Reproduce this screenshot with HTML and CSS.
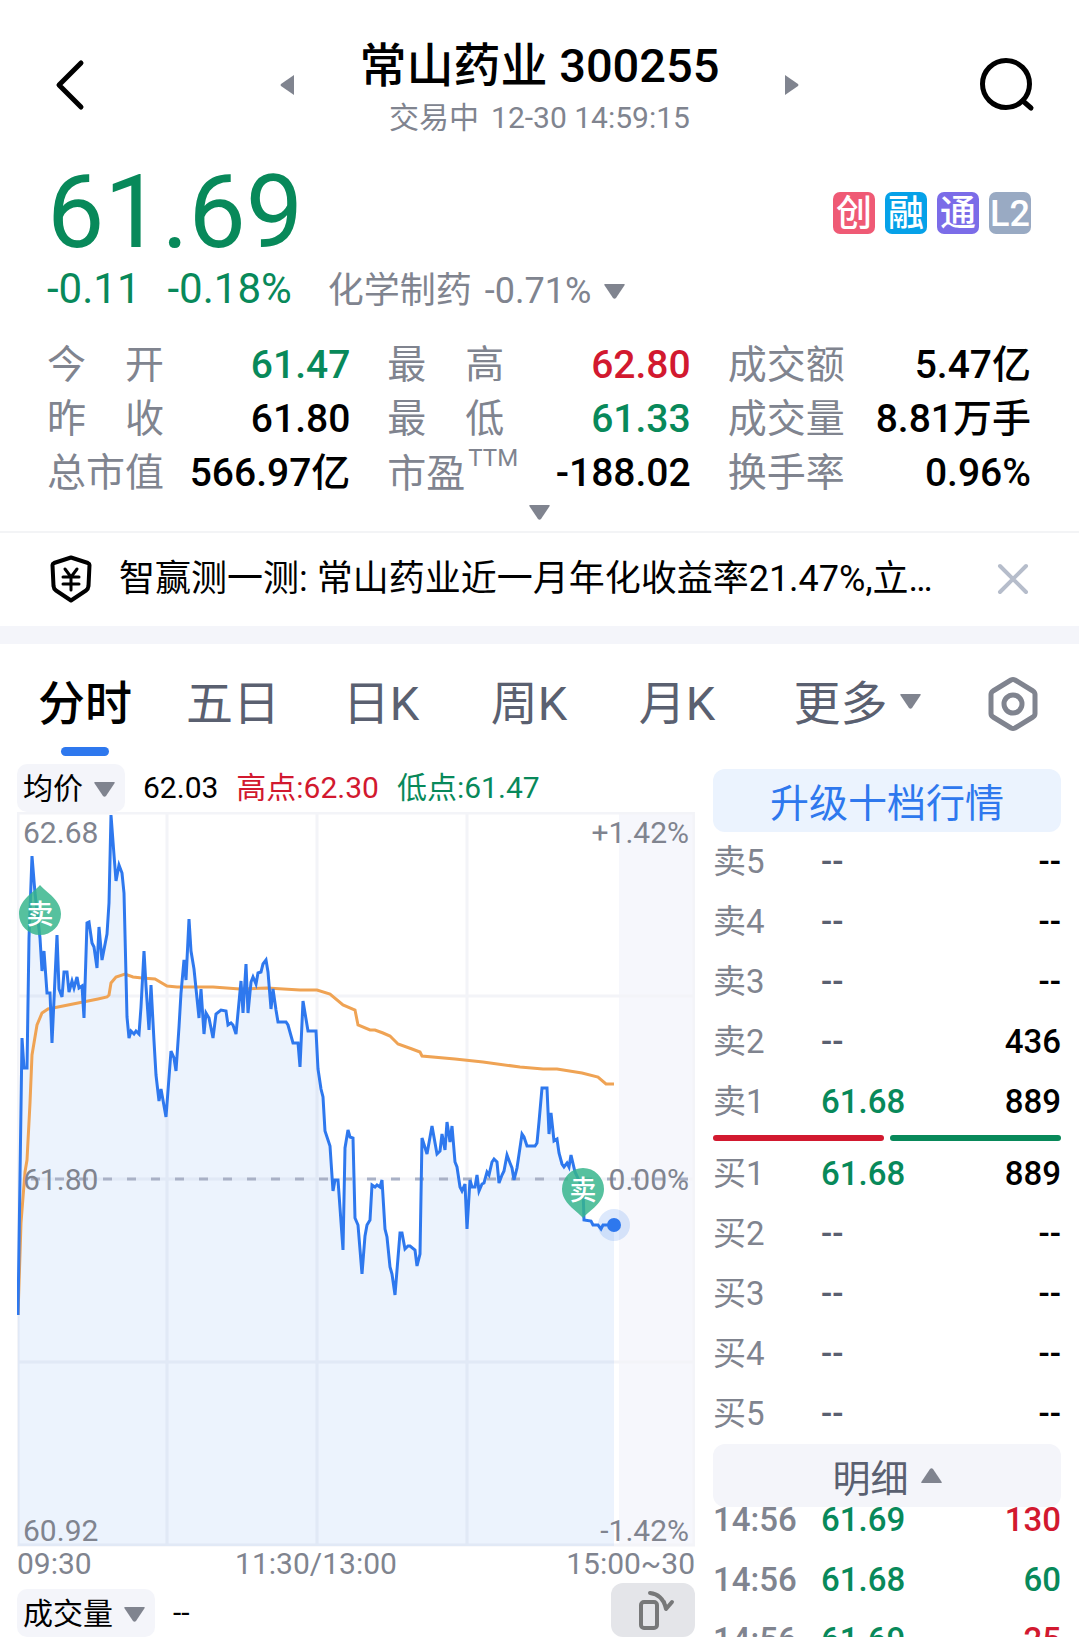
FILE: index.html
```
<!DOCTYPE html>
<html lang="zh-CN">
<head>
  <meta charset="utf-8">
  <meta name="viewport" content="width=device-width, initial-scale=1">
  <title>常山药业 300255</title>
  <link rel="stylesheet" href="styles.css">
</head>
<body>
  <div class="page">
    <header class="header">
      <button class="icon-btn" aria-label="返回">
        <svg width="42" height="52" viewBox="0 0 42 52"><path d="M37 4 15 26l22 22" fill="none" stroke="#000" stroke-width="5" stroke-linecap="round" stroke-linejoin="round"/></svg>
      </button>
      <div class="switcher">
        <button class="icon-btn" aria-label="上一只">
          <svg width="14" height="22" viewBox="0 0 14 22"><path d="M14 1v20L1 12q-1-1 0-2z" fill="#80848f"/></svg>
        </button>
        <div class="stock">
          <h1 class="stock-name">常山药业 300255</h1>
          <p class="stock-time"><span>交易中</span><span>12-30 14:59:15</span></p>
        </div>
        <button class="icon-btn" aria-label="下一只">
          <svg width="14" height="22" viewBox="0 0 14 22"><path d="M0 1v20l13-9q1-1 0-2z" fill="#80848f"/></svg>
        </button>
      </div>
      <button class="icon-btn search" aria-label="搜索">
        <svg width="56" height="56" viewBox="0 0 56 56" fill="none" stroke="#000" stroke-width="5" stroke-linecap="round"><circle cx="27" cy="27" r="23.500"/><path d="m44 44 8 7"/></svg>
      </button>
    </header>

    <section class="quote">
      <div class="price-row">
        <div class="price down">61.69</div>
        <div class="badges">
          <span class="badge badge-cy">创</span>
          <span class="badge badge-rz">融</span>
          <span class="badge badge-gt">通</span>
          <span class="badge badge-l2">L2</span>
        </div>
      </div>
      <div class="change-row">
        <span class="change down">-0.11</span>
        <span class="change down">-0.18%</span>
        <button class="sector"><span>化学制药</span><span>-0.71%</span><svg class="caret" viewBox="0 0 21 15"><path d="M1 0h19q1 0 .7 1L12 14q-1.500 1.500-3 0L.3 1Q0 0 1 0z"/></svg></button>
      </div>

      <dl class="stats">
        <div class="stat"><dt>今　开</dt><dd class="down">61.47</dd></div>
        <div class="stat"><dt>最　高</dt><dd class="up">62.80</dd></div>
        <div class="stat"><dt>成交额</dt><dd>5.47亿</dd></div>
        <div class="stat"><dt>昨　收</dt><dd>61.80</dd></div>
        <div class="stat"><dt>最　低</dt><dd class="down">61.33</dd></div>
        <div class="stat"><dt>成交量</dt><dd>8.81万手</dd></div>
        <div class="stat"><dt>总市值</dt><dd>566.97亿</dd></div>
        <div class="stat"><dt>市盈<sup>TTM</sup></dt><dd>-188.02</dd></div>
        <div class="stat"><dt>换手率</dt><dd>0.96%</dd></div>
      </dl>
      <button class="expand" aria-label="展开">
        <svg class="caret" viewBox="0 0 21 15"><path d="M1 0h19q1 0 .7 1L12 14q-1.500 1.500-3 0L.3 1Q0 0 1 0z"/></svg>
      </button>
    </section>

    <div class="banner">
      <svg class="shield" width="42" height="48" viewBox="0 0 42 48" fill="none" stroke="#000" stroke-linecap="round" stroke-linejoin="round">
        <path d="M21 2.500 38 8q1.500.6 1.500 2l-1 21q-.3 3-2.500 4.500L21 45.500 6 35.500Q3.800 34 3.500 31l-1-21q0-1.400 1.500-2z" stroke-width="4"/>
        <path d="m15 14 6 8 6-8M13 22h16M13 29h16M21 22v13" stroke-width="3"/>
      </svg>
      <a class="banner-text" href="#">智赢测一测: 常山药业近一月年化收益率21.47%,立…</a>
      <button class="icon-btn" aria-label="关闭">
        <svg width="32" height="32" viewBox="0 0 32 32"><path d="m3 3 26 26M29 3 3 29" stroke="#b6bdcb" stroke-width="4" stroke-linecap="round"/></svg>
      </button>
    </div>

    <nav class="tabs">
      <button class="tab active">分时</button>
      <button class="tab">五日</button>
      <button class="tab">日K</button>
      <button class="tab">周K</button>
      <button class="tab">月K</button>
      <button class="tab">更多<svg class="caret" viewBox="0 0 21 15"><path d="M1 0h19q1 0 .7 1L12 14q-1.500 1.500-3 0L.3 1Q0 0 1 0z"/></svg></button>
      <button class="tab" aria-label="设置">
        <svg width="52" height="56" viewBox="0 0 52 56" fill="none" stroke="#80848f" stroke-width="5" stroke-linejoin="round"><path d="M24 4q2-1 4 0l18 11q2 1.300 2 3.500v19q0 2.200-2 3.500L28 52q-2 1-4 0L6 41q-2-1.300-2-3.500v-19Q4 16.300 6 15z"/><circle cx="26" cy="28" r="9"/></svg>
      </button>
    </nav>

    <main class="content">
      <section class="chart-panel">
        <div class="legend">
          <button class="chip">均价<svg class="caret" viewBox="0 0 21 15"><path d="M1 0h19q1 0 .7 1L12 14q-1.500 1.500-3 0L.3 1Q0 0 1 0z"/></svg></button>
          <span>62.03</span>
          <span class="up">高点:62.30</span>
          <span class="down">低点:61.47</span>
        </div>

        <svg class="chart" viewBox="0 0 678 771" role="img" aria-label="分时图">
          <!-- after-hours zone -->
          <rect x="602" y="0" width="76" height="734" fill="#f6f7fc"/>
          <g class="grid">
            <path d="M0 1h678M0 184h678M0 367h678M0 550h678M0 733h678M1 0v734M150 0v734M300 0v734M450 0v734M677 0v734"/>
          </g>
          <path class="area" d="M1 734V503L5 226 7 256H10L12 126 15 44 18 81 23 126 25 159 27 139 30 181H33L35 231 40 123 42 177 45 185 47 160H50L52 180 55 169 57 176 60 165 62 176 65 174 67 206 70 111 72 110 75 131 77 135 80 156 82 115 85 148 90 122 92 91 94 3 97 43 99 69 102 53 105 61 107 81 110 205 112 226 114 219 117 222 119 219 122 222 124 195 127 139 129 174 132 218 134 173 137 229 139 263 142 289 144 277 149 305 154 239 157 246 159 259 162 215 164 181 167 148 169 168 172 107 174 139 177 157 182 206 184 177 187 222 189 201 192 206 196 226 199 202 204 198 209 199 211 213 214 211 216 213 219 222 224 169 226 201 229 152 231 201 234 170 236 165 239 172 241 161 244 160 246 152 249 148 251 160 254 197 256 177 259 198 261 210H269L271 213 276 231H281L283 255 286 189 291 219H299L301 257 304 277 306 285 308 319 313 334 316 379 318 368H321L326 438 328 336 331 318 333 325 336 326 338 406 341 413 345 462 348 424 350 413 353 408 355 373 358 375 360 373 363 375 365 368 368 417 370 425 373 455 375 462 378 483 383 421H385L388 437 391 434H393L398 438 400 454 403 442 405 326 410 342 415 314 420 342 423 339 425 322 428 338 430 310 433 330 435 314 438 350 440 355 443 375 445 379 448 372 450 417 453 368 455 375H458L460 363 462 379 465 372 467 371 470 360 472 363 475 350 477 347 480 350 482 371 485 363 487 359 490 343 493 351 495 356 497 368 500 356 505 322 507 325 510 334H518L520 331 522 310 525 276H530L532 322 534 301 537 329 540 327 542 341 545 352 547 355 550 351 552 355 554 343 558 360 566 377 567 408 574 409 576 413H581L584 417 586 413H597V734z"/>
          <path class="base" d="M14 367H672"/>
          <polyline class="avg" points="1,503 4,411 8,360 10,348 13,291 15,243 20,213 25,201 31,197 46,194 61,191 71,189 81,187 90,185 92,183 94,171 99,165 108,162 116,165 125,166 138,167 150,174 160,175 196,175 223,177 250,176 283,178 300,178 313,182 326,193 338,198 341,213 353,218 358,218 366,221 373,224 381,232 395,237 403,240 405,244 438,247 466,250 503,255 526,257 540,257 565,261 581,265 589,272 597,272"/>
          <polyline class="line" points="1,503 5,226 7,256 10,256 12,126 15,44 18,81 23,126 25,159 27,139 30,181 33,181 35,231 40,123 42,177 45,185 47,160 50,160 52,180 55,169 57,176 60,165 62,176 65,174 67,206 70,111 72,110 75,131 77,135 80,156 82,115 85,148 90,122 92,91 94,3 97,43 99,69 102,53 105,61 107,81 110,205 112,226 114,219 117,222 119,219 122,222 124,195 127,139 129,174 132,218 134,173 137,229 139,263 142,289 144,277 149,305 154,239 157,246 159,259 162,215 164,181 167,148 169,168 172,107 174,139 177,157 182,206 184,177 187,222 189,201 192,206 196,226 199,202 204,198 209,199 211,213 214,211 216,213 219,222 224,169 226,201 229,152 231,201 234,170 236,165 239,172 241,161 244,160 246,152 249,148 251,160 254,197 256,177 259,198 261,210 269,210 271,213 276,231 281,231 283,255 286,189 291,219 299,219 301,257 304,277 306,285 308,319 313,334 316,379 318,368 321,368 326,438 328,336 331,318 333,325 336,326 338,406 341,413 345,462 348,424 350,413 353,408 355,373 358,375 360,373 363,375 365,368 368,417 370,425 373,455 375,462 378,483 383,421 385,421 388,437 391,434 393,434 398,438 400,454 403,442 405,326 410,342 415,314 420,342 423,339 425,322 428,338 430,310 433,330 435,314 438,350 440,355 443,375 445,379 448,372 450,417 453,368 455,375 458,375 460,363 462,379 465,372 467,371 470,360 472,363 475,350 477,347 480,350 482,371 485,363 487,359 490,343 493,351 495,356 497,368 500,356 505,322 507,325 510,334 518,334 520,331 522,310 525,276 530,276 532,322 534,301 537,329 540,327 542,341 545,352 547,355 550,351 552,355 554,343 558,360 566,377 567,408 574,409 576,413 581,413 584,417 586,413 597,413"/>
          <circle cx="597" cy="413" r="16" fill="#2e78ee" opacity=".16"/>
          <circle cx="597" cy="413" r="7" fill="#2e78ee"/>

          <!-- sell markers -->
          <path class="pin" d="M23 73C30 81 44 88 44 102A21 21 0 0 1 2 102C2 88 16 81 23 73z"/>
          <text class="pin-text" x="23" y="112">卖</text>
          <path class="pin" d="M566 406C573 398 587 391 587 377A21 21 0 0 0 545 377C545 391 559 398 566 406z"/>
          <text class="pin-text" x="566" y="388">卖</text>

          <g class="axis">
            <text x="6" y="31">62.68</text>
            <text x="6" y="378">61.80</text>
            <text x="6" y="729">60.92</text>
            <text x="672" y="31" text-anchor="end">+1.42%</text>
            <text x="672" y="378" text-anchor="end">0.00%</text>
            <text x="672" y="729" text-anchor="end">-1.42%</text>
            <text x="0" y="762">09:30</text>
            <text x="299" y="762" text-anchor="middle">11:30/13:00</text>
            <text x="678" y="762" text-anchor="end">15:00~30</text>
          </g>
        </svg>

        <div class="volume-row">
          <button class="chip">成交量<svg class="caret" viewBox="0 0 21 15"><path d="M1 0h19q1 0 .7 1L12 14q-1.500 1.500-3 0L.3 1Q0 0 1 0z"/></svg></button>
          <span class="volume">--</span>
          <button class="rotate" aria-label="横屏">
            <svg width="44" height="42" viewBox="0 0 44 42" fill="none" stroke="#777879" stroke-width="4" stroke-linecap="round" stroke-linejoin="round"><rect x="10" y="13" width="16" height="26" rx="3"/><path d="M19 4q12 1 16 15M33 13l2 7 6-7"/></svg>
          </button>
        </div>
      </section>

      <aside class="book">
        <button class="upgrade">升级十档行情</button>
        <table class="rows">
          <tr><th>卖5</th><td class="none">--</td><td>--</td></tr>
          <tr><th>卖4</th><td class="none">--</td><td>--</td></tr>
          <tr><th>卖3</th><td class="none">--</td><td>--</td></tr>
          <tr><th>卖2</th><td class="none">--</td><td>436</td></tr>
          <tr><th>卖1</th><td class="down">61.68</td><td>889</td></tr>
        </table>
        <div class="ratio"><span class="ratio-buy"></span><span class="ratio-sell"></span></div>
        <table class="rows">
          <tr><th>买1</th><td class="down">61.68</td><td>889</td></tr>
          <tr><th>买2</th><td class="none">--</td><td>--</td></tr>
          <tr><th>买3</th><td class="none">--</td><td>--</td></tr>
          <tr><th>买4</th><td class="none">--</td><td>--</td></tr>
          <tr><th>买5</th><td class="none">--</td><td>--</td></tr>
        </table>
        <button class="detail"><span>明细</span><svg class="caret caret-up" viewBox="0 0 21 15"><path d="M1 0h19q1 0 .7 1L12 14q-1.500 1.500-3 0L.3 1Q0 0 1 0z"/></svg></button>
        <table class="rows trades">
          <tr><th>14:56</th><td class="down">61.69</td><td class="up">130</td></tr>
          <tr><th>14:56</th><td class="down">61.68</td><td class="down">60</td></tr>
          <tr><th>14:56</th><td class="down">61.69</td><td class="up">25</td></tr>
        </table>
      </aside>
    </main>
  </div>
</body>
</html>
```
FILE: styles.css
```
:root {
  --text: #000000;
  --text-gray: #80848f;
  --text-slate: #5a6070;
  --up: #d2192f;
  --down: #08895a;
  --blue: #2e78ee;
  --bg-chip: #f4f5fa;
  --bg-blue: #ebf3fe;
}

* {
  margin: 0;
  padding: 0;
  box-sizing: border-box;
}

body {
  background: #ffffff;
  color: var(--text);
  font-family: Roboto, "Noto Sans CJK SC", sans-serif;
}

button {
  border: none;
  background: none;
  color: inherit;
  font: inherit;
  cursor: pointer;
}

svg {
  display: block;
}

.page {
  height: 100vh;
  overflow: hidden;
}

.up {
  color: var(--up);
}

.down {
  color: var(--down);
}

.caret {
  width: 21px;
  height: 15px;
  fill: var(--text-gray);
}

.caret-up {
  transform: rotate(180deg);
}

.icon-btn {
  display: flex;
}

/* header */
.header {
  display: grid;
  grid-template-columns: 1fr auto 1fr;
  align-items: center;
  padding: 34px 44px 0;
}

.search {
  justify-self: end;
}

.switcher {
  display: flex;
  align-items: center;
  gap: 66px;
}

.stock {
  text-align: center;
}

.stock-name {
  font-size: 47px;
  line-height: 64px;
  font-weight: 500;
}

.stock-time {
  display: flex;
  justify-content: center;
  gap: 12px;
  margin-top: 2px;
  font-size: 30px;
  line-height: 36px;
  color: var(--text-gray);
}

/* quote */
.quote {
  padding: 24px 48px 0 47px;
  border-bottom: 2px solid #f3f4f6;
}

.price-row {
  display: flex;
  align-items: center;
  justify-content: space-between;
}

.price {
  font-size: 102px;
  line-height: 104px;
}

.badges {
  display: flex;
  gap: 10px;
  padding-top: 2px;
}

.badge {
  width: 42px;
  height: 42px;
  border-radius: 7px;
  color: #ffffff;
  font-size: 36px;
  line-height: 44px;
  font-weight: 500;
  text-align: center;
}

.badge-cy {
  background: #ef5a75;
}

.badge-rz {
  background: #06a1e8;
}

.badge-gt {
  background: #7b6ce8;
}

.badge-l2 {
  background: #99aac3;
}

.change-row {
  display: flex;
  align-items: baseline;
  gap: 27px;
}

.change {
  font-size: 42px;
  line-height: 50px;
}

.sector {
  display: flex;
  align-items: center;
  gap: 13px;
  margin-left: 9px;
  font-size: 36px;
  line-height: 42px;
  color: var(--text-gray);
}

.stats {
  display: grid;
  grid-template-columns: repeat(3, 1fr);
  column-gap: 37px;
  margin-top: 24px;
  font-size: 39px;
  line-height: 54px;
}

.stat {
  display: flex;
  justify-content: space-between;
  white-space: nowrap;
}

.stat dt {
  color: var(--text-gray);
}

.stat dd {
  font-weight: 500;
}

.stat sup {
  margin-left: 3px;
  font-size: 24px;
  line-height: 24px;
  vertical-align: 21px;
}

.expand {
  display: block;
  margin: 0 auto;
  padding: 4px 16px 11px;
}

/* banner */
.banner {
  display: flex;
  align-items: center;
  padding: 0 50px 1px;
  height: 93px;
}

.banner-text {
  flex: 1;
  margin-left: 27px;
  overflow: hidden;
  color: var(--text);
  font-size: 36px;
  line-height: 48px;
  text-decoration: none;
  white-space: nowrap;
}

/* tabs */
.tabs {
  display: grid;
  grid-template-columns: repeat(5, 148fr) 212fr 99fr;
  padding: 28px 17px 8px 11px;
  border-top: 18px solid var(--bg-chip);
}

.tab {
  display: flex;
  align-items: center;
  justify-content: center;
  gap: 12px;
  height: 64px;
  font-size: 47px;
  line-height: 62px;
  color: var(--text-slate);
}

.tab .caret {
  margin-bottom: 5px;
}

.tab.active {
  flex-direction: column;
  height: 84px;
  font-weight: 500;
  color: var(--text);
}

.tab.active::after {
  content: '';
  width: 48px;
  height: 9px;
  border-radius: 5px;
  background: var(--blue);
}

/* chart + order book */
.content {
  display: grid;
  grid-template-columns: 678fr 348fr;
  gap: 18px;
  padding: 0 18px 0 17px;
}

.legend {
  display: flex;
  align-items: center;
  gap: 18px;
  height: 48px;
  font-size: 30px;
  line-height: 50px;
}

.chip {
  display: flex;
  align-items: center;
  gap: 11px;
  height: 48px;
  padding: 2px 10px 0 6px;
  border-radius: 10px;
  background: var(--bg-chip);
  font-size: 30px;
  line-height: 48px;
}

.chart {
  width: 100%;
  font-size: 30px;
}

.grid path {
  stroke: #f3f4f8;
  stroke-width: 3;
}

.area {
  fill: #2e78ee;
  fill-opacity: 0.09;
}

.base {
  stroke: #a9b1c6;
  stroke-width: 3;
  stroke-dasharray: 9 15;
}

.line {
  fill: none;
  stroke: var(--blue);
  stroke-width: 3;
}

.avg {
  fill: none;
  stroke: #efa354;
  stroke-width: 3;
}

.axis text {
  fill: var(--text-gray);
}

.pin {
  fill: #36b58c;
  fill-opacity: 0.84;
}

.pin-text {
  fill: #ffffff;
  font-size: 27px;
  font-weight: 500;
  text-anchor: middle;
}

.volume-row {
  display: flex;
  align-items: flex-end;
}

.volume {
  margin-left: 18px;
  font-size: 30px;
  line-height: 48px;
}

.rotate {
  display: flex;
  align-items: center;
  justify-content: center;
  width: 84px;
  height: 54px;
  margin-left: auto;
  border-radius: 12px;
  background: #e4e5e9;
}

.upgrade,
.detail {
  display: flex;
  align-items: center;
  justify-content: center;
  gap: 12px;
  width: 100%;
  height: 63px;
  border-radius: 12px;
  line-height: 48px;
}

.upgrade {
  margin-top: 5px;
  padding-top: 7px;
  background: var(--bg-blue);
  color: var(--blue);
  font-size: 39px;
}

.detail {
  position: relative;
  background: var(--bg-chip);
  color: var(--text-slate);
  font-size: 38px;
}

.detail span {
  padding-top: 6px;
}

.rows {
  width: 100%;
  table-layout: fixed;
  border-collapse: collapse;
  font-size: 33px;
  line-height: 60px;
}

.rows th {
  width: 108px;
  font-weight: 400;
  text-align: left;
  color: var(--text-gray);
}

.rows td {
  font-weight: 500;
}

.rows td:last-child {
  text-align: right;
}

.rows .none {
  color: var(--text-slate);
}

.ratio {
  display: flex;
  gap: 6px;
  margin: 3px 0;
}

.ratio span {
  flex: 1;
  height: 6px;
  border-radius: 3px;
}

.ratio-buy {
  background: var(--up);
}

.ratio-sell {
  background: var(--down);
}

/* list is scrolled a little under the button */
.trades {
  margin-top: -17px;
}

.trades th {
  font-weight: 500;
}
```
